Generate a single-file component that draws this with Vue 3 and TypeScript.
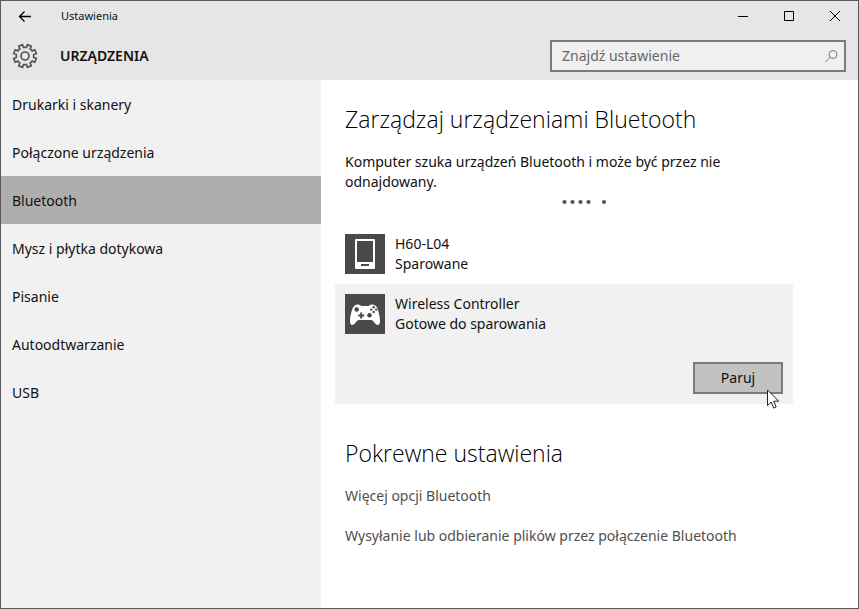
<script setup lang="ts">
import { ref } from 'vue'

interface Device {
  name: string
  status: string
  kind: 'phone' | 'gamepad'
}

const categories: string[] = [
  'Drukarki i skanery',
  'Połączone urządzenia',
  'Bluetooth',
  'Mysz i płytka dotykowa',
  'Pisanie',
  'Autoodtwarzanie',
  'USB',
]
const devices: Device[] = [
  { name: 'H60-L04', status: 'Sparowane', kind: 'phone' },
  { name: 'Wireless Controller', status: 'Gotowe do sparowania', kind: 'gamepad' },
]
const related: string[] = [
  'Więcej opcji Bluetooth',
  'Wysyłanie lub odbieranie plików przez połączenie Bluetooth',
]

const active = ref('Bluetooth')
const selected = ref('Wireless Controller')
const query = ref('')

// Outline of a cog with eight teeth, a gap facing straight up.
function cog(centre: number, outer: number, inner: number, teeth: number): string {
  const points: string[] = []
  const step = 360 / teeth
  for (let i = 0; i < teeth; i++) {
    const mid = (i + 0.5) * step
    const corners: [number, number][] = [
      [mid - 13, inner],
      [mid - 10, outer],
      [mid + 10, outer],
      [mid + 13, inner],
    ]
    for (const [deg, r] of corners) {
      const a = ((deg - 90) * Math.PI) / 180
      points.push(`${(centre + r * Math.cos(a)).toFixed(2)} ${(centre + r * Math.sin(a)).toFixed(2)}`)
    }
  }
  return `M${points.join('L')}Z`
}
const cogPath = cog(13, 11.6, 8.8, 8)
</script>

<template>
  <div class="window">
    <header class="top">
      <div class="titlebar">
        <button class="back" aria-label="Wstecz">
          <svg width="14" height="12" viewBox="0 0 14 12"><path d="M13 5.500H1.500M6.500.5l-5 5 5 5" /></svg>
        </button>
        <span class="caption">Ustawienia</span>
        <button class="control" aria-label="Minimalizuj">
          <svg width="12" height="12" viewBox="0 0 12 12"><path d="M1 5.500h10" /></svg>
        </button>
        <button class="control" aria-label="Maksymalizuj">
          <svg width="12" height="12" viewBox="0 0 12 12"><path d="M1.500.5h9v9h-9z" /></svg>
        </button>
        <button class="control" aria-label="Zamknij">
          <svg width="12" height="12" viewBox="0 0 12 12"><path d="M1 0l10 10M11 0L1 10" /></svg>
        </button>
      </div>
      <div class="heading">
        <svg class="cog" width="26" height="26" viewBox="0 0 26 26">
          <path :d="cogPath" />
          <circle cx="13" cy="13" r="4" />
        </svg>
        <h1>URZĄDZENIA</h1>
        <label class="search">
          <input v-model="query" type="text" placeholder="Znajdź ustawienie" aria-label="Znajdź ustawienie" />
          <svg width="14" height="14" viewBox="0 0 14 14">
            <circle cx="9" cy="5.500" r="4" />
            <path d="M6.100 8.400L1.500 13" />
          </svg>
        </label>
      </div>
    </header>

    <div class="body">
      <nav class="sidebar">
        <a
          v-for="item in categories"
          :key="item"
          href="#"
          :class="{ active: item === active }"
          @click.prevent="active = item"
        >{{ item }}</a>
      </nav>

      <main class="content">
        <h2>Zarządzaj urządzeniami Bluetooth</h2>
        <p class="status">Komputer szuka urządzeń Bluetooth i może być przez nie odnajdowany.</p>
        <svg class="progress" width="100" height="20" viewBox="0 0 100 20" aria-hidden="true">
          <circle v-for="x in [50.5, 58.5, 66.5, 74.5, 90]" :key="x" :cx="x" cy="10" r="2.1" />
        </svg>

        <ul class="devices">
          <li
            v-for="device in devices"
            :key="device.name"
            :class="{ selected: device.name === selected }"
            @click="selected = device.name"
          >
            <div class="device">
              <svg v-if="device.kind === 'phone'" class="tile" width="40" height="40" viewBox="0 0 40 40">
                <path
                  fill-rule="evenodd"
                  d="M11 5h18a1 1 0 0 1 1 1v28a1 1 0 0 1-1 1H11a1 1 0 0 1-1-1V6a1 1 0 0 1 1-1zM12 7v21h16V7zM16 30v2h8v-2z"
                />
              </svg>
              <svg v-else class="tile" width="40" height="40" viewBox="0 0 40 40">
                <path
                  d="M11 11c1.300-.7 3.200-.6 4.200.3.500.4 1 .6 1.600.6h6.400c.6 0 1.100-.2 1.600-.6 1-.9 2.900-1 4.200-.3 1.700.8 2.700 1.500 3.400 3.300 1.400 3.600 2.400 8.100 2.600 12.200.1 2.600-.7 4.500-2.200 4.500-1.600 0-2.700-1.500-4-3.200-1-1.300-1.800-1.800-3.400-1.800H14.600c-1.600 0-2.400.5-3.400 1.800-1.300 1.700-2.400 3.200-4 3.200-1.500 0-2.300-1.900-2.200-4.500.2-4.100 1.200-8.600 2.600-12.200.7-1.800 1.700-2.500 3.400-3.300z"
                />
                <g class="cut">
                  <circle cx="11.700" cy="15.500" r="2.300" />
                  <circle cx="24.500" cy="21.300" r="2.300" />
                  <path d="M15.200 18.500h2v2h2v2h-2v2h-2v-2h-2v-2h2z" />
                  <circle cx="28.700" cy="13.200" r="1.200" />
                  <circle cx="26.200" cy="15.600" r="1.200" />
                  <circle cx="31.200" cy="15.600" r="1.200" />
                  <circle cx="28.700" cy="18" r="1.200" />
                </g>
              </svg>
              <div>
                <div>{{ device.name }}</div>
                <div>{{ device.status }}</div>
              </div>
            </div>
            <div v-if="device.name === selected" class="actions">
              <button class="pair">Paruj</button>
              <svg class="pointer" width="13" height="21" viewBox="0 0 13 21" aria-hidden="true">
                <path d="M.5 1v15.500l3.600-3.400 2.600 6 2.500-1.100-2.500-5.800h5z" />
              </svg>
            </div>
          </li>
        </ul>

        <h2>Pokrewne ustawienia</h2>
        <a v-for="link in related" :key="link" class="related" href="#">{{ link }}</a>
      </main>
    </div>
  </div>
</template>

<style>
body {
  margin: 0;
}
</style>

<style scoped>
* {
  box-sizing: border-box;
}
.window {
  display: flex;
  flex-direction: column;
  min-height: 100vh;
  border: 1px solid #5a5858;
  background: #fff;
  color: #111;
  font-family: 'Noto Sans', 'Open Sans', sans-serif;
  font-size: 14px;
  line-height: 20px;
}
button,
input {
  font: inherit;
  color: inherit;
}
a {
  color: inherit;
  text-decoration: none;
}
svg {
  display: block;
  flex: none;
}
.top {
  background: #e6e6e6;
}
.titlebar {
  display: flex;
  height: 31px;
}
.titlebar button {
  display: flex;
  align-items: center;
  justify-content: center;
  width: 46px;
  padding: 0;
  border: 0;
  background: none;
}
.titlebar svg {
  fill: none;
  stroke: #000;
}
.titlebar .back {
  width: 48px;
}
.back path {
  stroke-width: 1.3;
}
.caption {
  flex: 1;
  padding-left: 12px;
  font-size: 11px;
  line-height: 30px;
}
.heading {
  display: flex;
  align-items: center;
  height: 48px;
  padding: 0 12px 0 11px;
}
.cog {
  fill: none;
  stroke: #555;
  stroke-width: 1.7;
}
h1 {
  flex: 1;
  margin: 0;
  padding-left: 22px;
  font-size: 14px;
  font-weight: 600;
}
.search {
  display: flex;
  align-items: center;
  width: 296px;
  height: 32px;
  padding: 0 6px 0 10px;
  border: 2px solid #7a7a7a;
  background: #f0f0f0;
}
.search input {
  flex: 1;
  min-width: 0;
  padding: 0;
  border: 0;
  outline: 0;
  background: none;
}
.search input::placeholder {
  color: #666;
  opacity: 1;
}
.search svg {
  fill: none;
  stroke: #777;
}
.body {
  display: flex;
  flex: 1;
}
.sidebar {
  display: flex;
  flex: none;
  flex-direction: column;
  width: 320px;
  background: #f1f1f1;
}
.sidebar a {
  padding: 15px 11px 13px;
}
.sidebar .active {
  background: #aeaeae;
}
.content {
  flex: 1;
  max-width: 486px;
  padding: 24px;
}
h2 {
  margin: 0;
  font-family: 'Open Sans', 'Noto Sans', sans-serif;
  font-size: 23px;
  font-weight: 300;
  line-height: 30px;
  color: #000;
}
.status {
  max-width: 400px;
  margin: 18px 0 0;
}
.progress {
  margin: 0 auto;
  fill: #555;
}
.devices {
  margin: 12px -10px 34px;
  padding: 0;
  list-style: none;
}
.devices li {
  padding: 10px;
}
.devices .selected {
  background: #f1f1f1;
}
.device {
  display: flex;
  gap: 10px;
}
.tile {
  background: #4c4a48;
  fill: #fff;
}
.cut {
  fill: #4c4a48;
}
.actions {
  position: relative;
  display: flex;
  justify-content: flex-end;
  margin-top: 28px;
}
.pair {
  width: 90px;
  height: 32px;
  padding: 0;
  border: 2px solid #7a7a7a;
  background: #c2c2c2;
}
.pointer {
  position: absolute;
  top: 27px;
  right: 3px;
  fill: #fff;
  stroke: #222;
}
.related {
  display: block;
  width: max-content;
  margin-top: 20px;
  color: #505050;
}
h2 + .related {
  margin-top: 18px;
}
</style>
